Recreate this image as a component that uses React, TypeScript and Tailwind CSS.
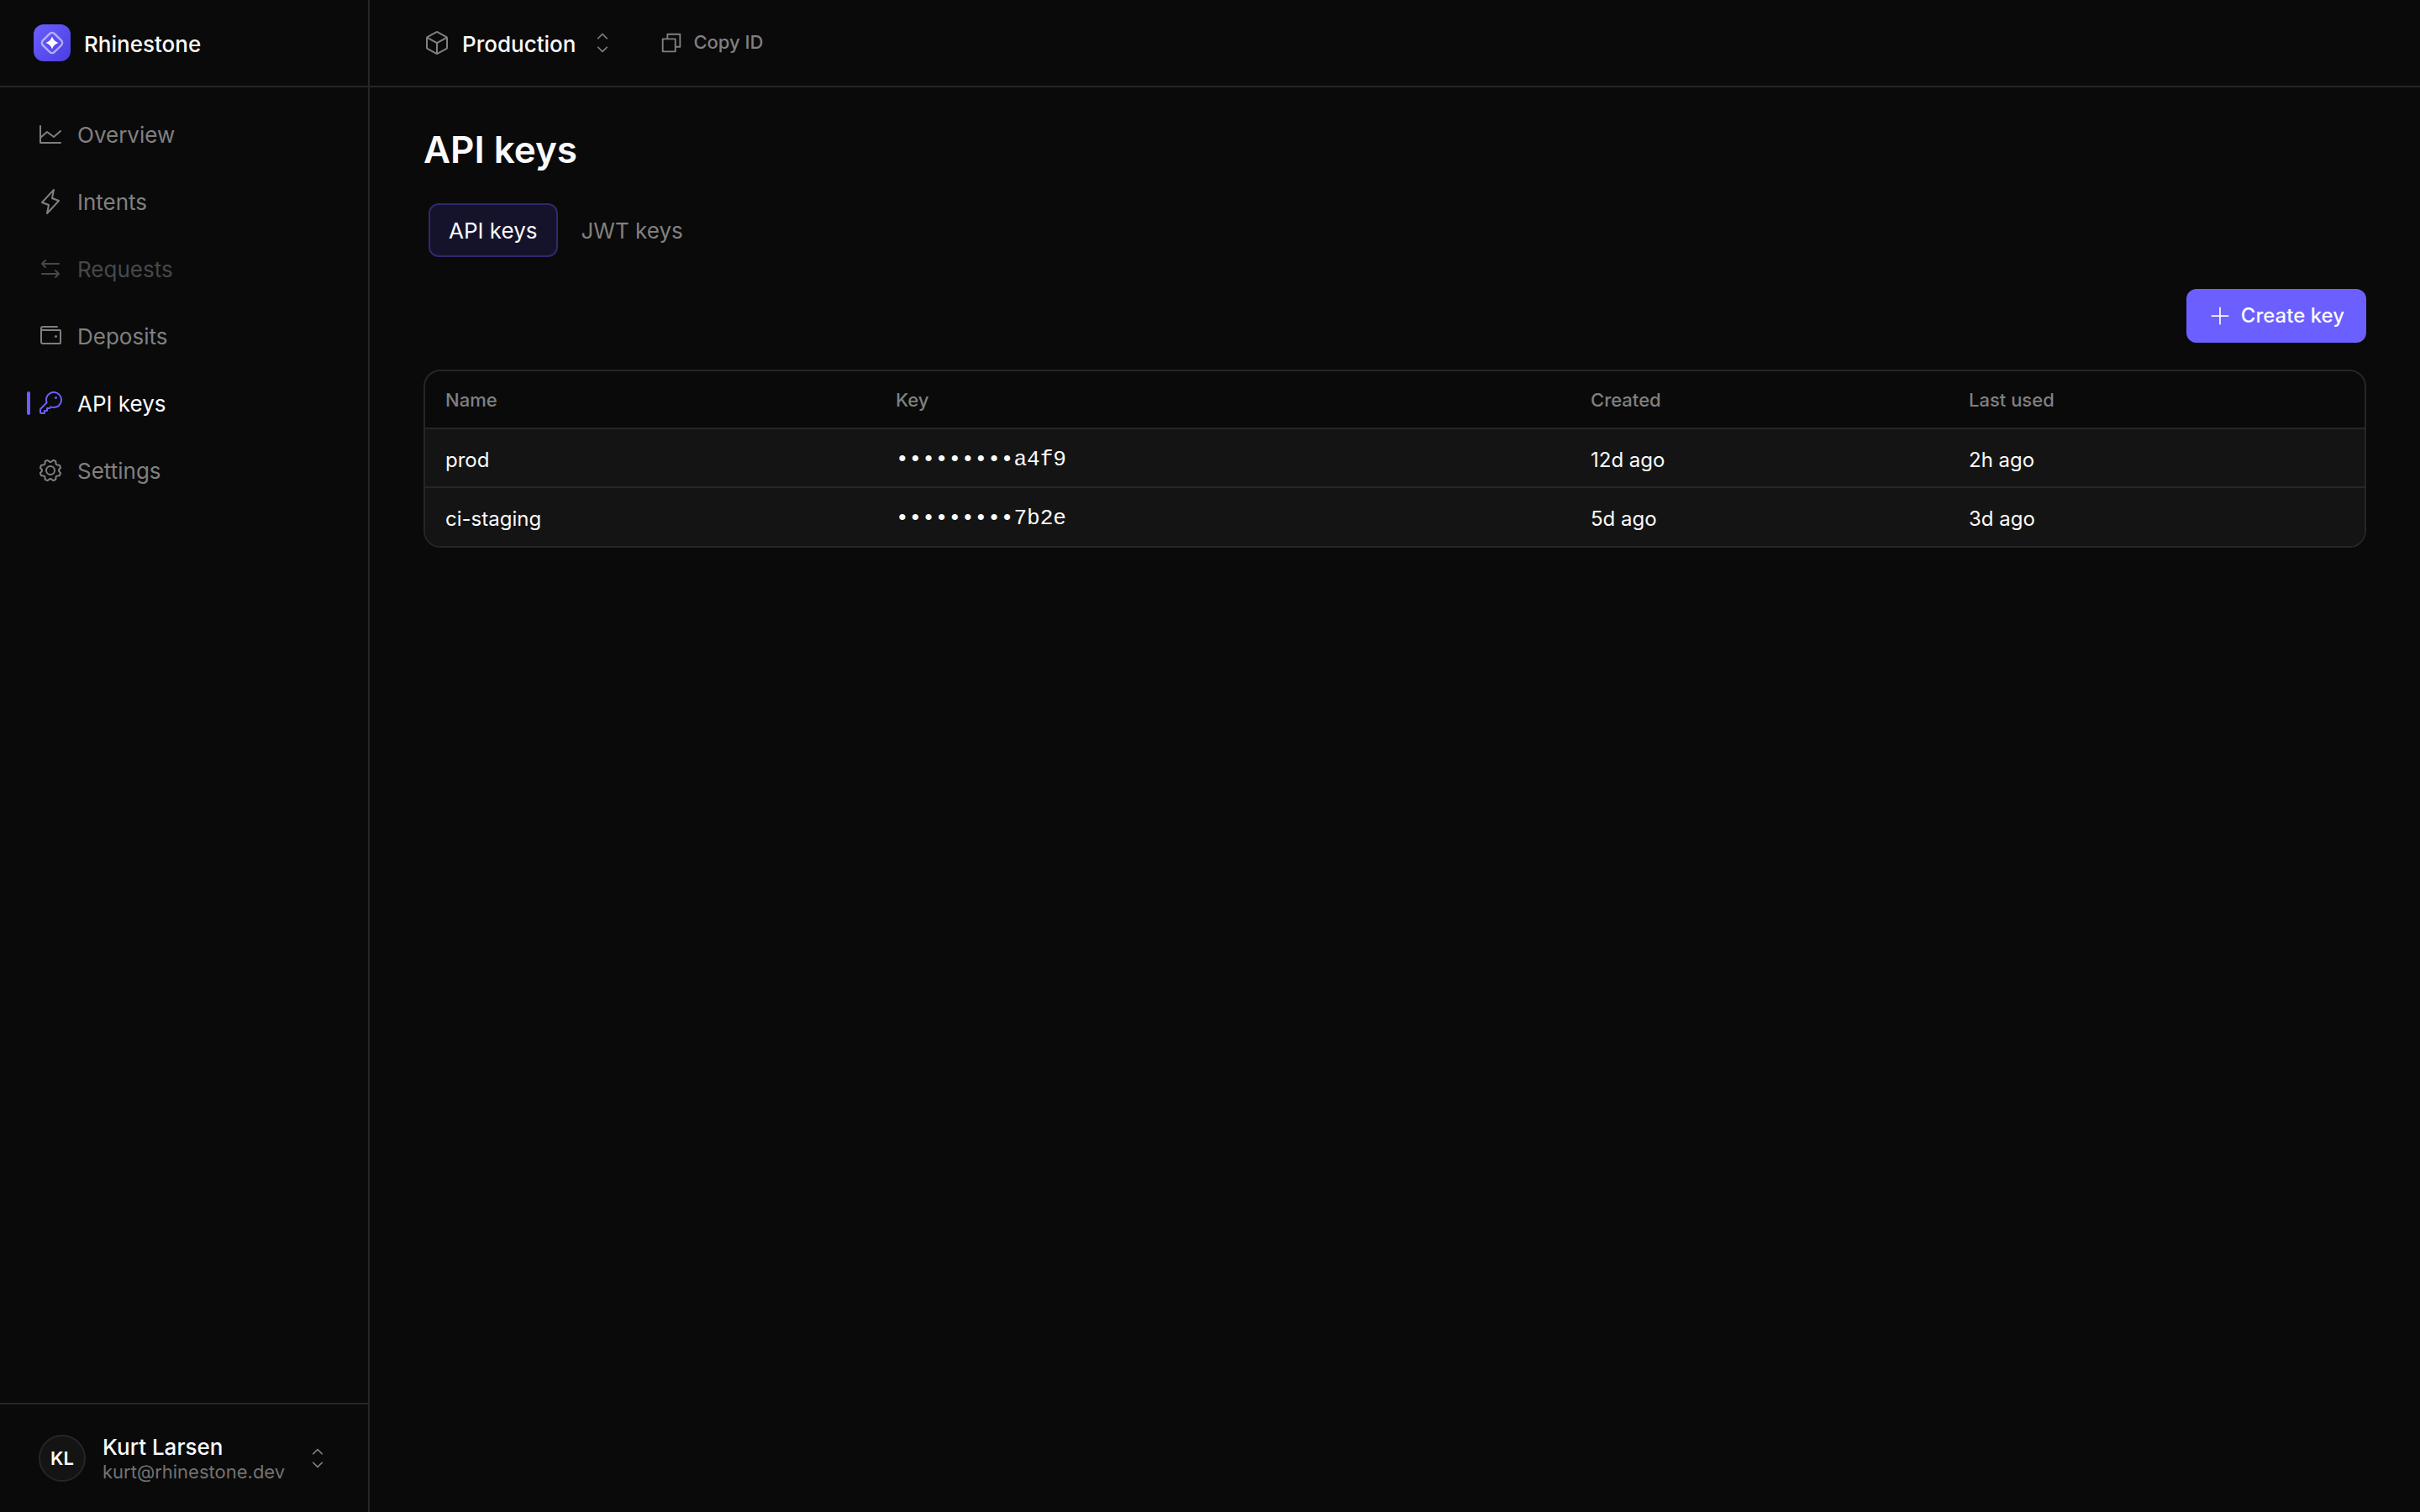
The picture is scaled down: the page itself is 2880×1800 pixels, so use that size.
import React from "react";
import { PiChartLine, PiLightning, PiArrowsLeftRight, PiWallet, PiKey, PiGear, PiCube, PiCopy, PiCaretUpDown, PiPlus } from "react-icons/pi";

function LogoMark() {
  return (
    <div className="flex h-[44px] w-[44px] items-center justify-center rounded-[12px] bg-gradient-to-br from-[#6c5fff] to-[#4a3de0]">
      <svg width="28" height="28" viewBox="0 0 28 28" fill="none">
        <rect x="4.250" y="4.250" width="19.500" height="19.500" rx="4" transform="rotate(45 14 14)" stroke="#ffffff" strokeOpacity="0.55" strokeWidth="2.400" />
        <path d="M14 6.500Q15.800 12.200 21.500 14Q15.800 15.800 14 21.500Q12.200 15.800 6.500 14Q12.200 12.200 14 6.500Z" fill="#ffffff" />
      </svg>
    </div>
  );
}

const nav = [
  { label: "Overview", Icon: PiChartLine, cls: "text-[#808080]" },
  { label: "Intents", Icon: PiLightning, cls: "text-[#808080]" },
  { label: "Requests", Icon: PiArrowsLeftRight, cls: "text-[#484848]" },
  { label: "Deposits", Icon: PiWallet, cls: "text-[#808080]" },
  { label: "API keys", Icon: PiKey, cls: "text-[#fafafa]", active: true },
  { label: "Settings", Icon: PiGear, cls: "text-[#808080]" },
];

const rows = [
  { name: "prod", key: "•••••••••a4f9", created: "12d ago", used: "2h ago" },
  { name: "ci-staging", key: "•••••••••7b2e", created: "5d ago", used: "3d ago" },
];

export default function App() {
  return (
    <div className="flex h-[1800px] w-[2880px] overflow-hidden bg-[#0a0a0a] font-['Inter',sans-serif] text-[#fafafa]">
      <aside className="flex h-full w-[440px] shrink-0 flex-col border-r-2 border-[#262626]">
        <div className="flex h-[104px] shrink-0 items-center gap-[16px] border-b-2 border-[#262626] pl-[40px]">
          <LogoMark />
          <span className="pt-[3px] text-[26px] font-medium leading-[36px]">Rhinestone</span>
        </div>
        <nav className="flex flex-1 flex-col pt-[16px]">
          {nav.map((n) => (
            <div key={n.label} className={`relative flex h-[80px] items-center gap-[16px] pl-[44px] ${n.cls}`}>
              {n.active && <span className="absolute left-[32px] top-[26px] h-[28px] w-[4px] rounded-full bg-[#6c5fff]" />}
              <n.Icon size={32} className={n.active ? "text-[#6c5fff]" : ""} />
              <span className="pt-[2px] text-[26px] leading-[36px]">{n.label}</span>
            </div>
          ))}
        </nav>
        <div className="flex h-[130px] shrink-0 items-center border-t-2 border-[#262626] pl-[46px]">
          <div className="flex h-[56px] w-[56px] shrink-0 items-center justify-center rounded-full border-2 border-[#262626] bg-[#141414] text-[22px] font-semibold">KL</div>
          <div className="ml-[20px] flex w-[222px] shrink-0 flex-col">
            <span className="text-[26px] font-medium leading-[32px]">Kurt Larsen</span>
            <span className="text-[22px] leading-[26px] text-[#737373]">kurt@rhinestone.dev</span>
          </div>
          <PiCaretUpDown size={28} className="ml-[20px] text-[#808080]" />
        </div>
      </aside>
      <main className="flex min-w-0 flex-1 flex-col">
        <header className="flex h-[104px] shrink-0 items-center border-b-2 border-[#262626] pl-[64px]">
          <PiCube size={32} className="text-[#808080]" />
          <span className="ml-[14px] pt-[3px] text-[26px] font-medium leading-[36px]">Production</span>
          <PiCaretUpDown size={28} className="ml-[18px] text-[#808080]" />
          <PiCopy size={30} className="ml-[53px] text-[#808080]" />
          <span className="mb-[3px] ml-[11px] text-[22px] font-medium leading-[32px] text-[#808080]">Copy ID</span>
        </header>
        <div className="flex flex-col px-[64px] pt-[48px]">
          <h1 className="text-[44px] font-semibold leading-[52px]">API keys</h1>
          <div className="ml-[6px] mt-[38px] flex items-center gap-[28px]">
            <div className="flex h-[64px] items-center rounded-[12px] border-2 border-[#2f2a6e] bg-[#15132b] px-[22px] pt-[2px] text-[26px] leading-[36px]">API keys</div>
            <div className="pt-[2px] text-[26px] leading-[36px] text-[#808080]">JWT keys</div>
          </div>
          <div className="mt-[38px] flex justify-end">
            <button className="flex h-[64px] items-center gap-[11px] rounded-[12px] bg-[#6c5fff] pl-[26px] pr-[26px] text-[24px] font-medium leading-[36px]">
              <PiPlus size={28} />
              Create key
            </button>
          </div>
          <div className="mt-[32px] overflow-hidden rounded-[20px] border-2 border-[#262626]">
            <table className="w-full table-fixed border-collapse text-left">
              <colgroup>
                <col className="w-[536px]" />
                <col className="w-[827px]" />
                <col className="w-[450px]" />
                <col />
              </colgroup>
              <thead>
                <tr className="h-[68px] text-[22px] text-[#808080]">
                  <th className="pl-[24px] pt-[1px] font-medium">Name</th>
                  <th className="pl-[24px] pt-[1px] font-medium">Key</th>
                  <th className="pl-[24px] pt-[1px] font-medium">Created</th>
                  <th className="pl-[24px] pt-[1px] font-medium">Last used</th>
                </tr>
              </thead>
              <tbody className="bg-[#141414] text-[24px]">
                {rows.map((r) => (
                  <tr key={r.name} className="h-[70px] border-t-2 border-[#262626]">
                    <td className="pl-[24px] pt-[5px]">{r.name}</td>
                    <td className="pl-[24px] pt-[4px] font-['Liberation_Mono',monospace] text-[26px]">{r.key}</td>
                    <td className="pl-[24px] pt-[5px]">{r.created}</td>
                    <td className="pl-[24px] pt-[5px]">{r.used}</td>
                  </tr>
                ))}
              </tbody>
            </table>
          </div>
        </div>
      </main>
    </div>
  );
}
